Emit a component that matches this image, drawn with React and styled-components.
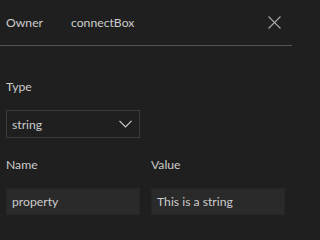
import React from 'react'
import styled, { createGlobalStyle } from 'styled-components'

const Global = createGlobalStyle`
  html, body {
    margin: 0;
    padding: 0;
    background: #1f1f1f;
  }
  body {
    font-family: Lato, "Noto Sans", sans-serif;
    font-size: 12.2px;
    color: #cccccc;
  }
`

const Panel = styled.div`
  width: 293px;
  height: 234px;
  background: #1f1f1f;
`

const Header = styled.div`
  display: flex;
  align-items: center;
  height: 44px;
  padding: 0 11px 1px 6px;
  border-bottom: 1px solid #555555;
  margin-right: 1px;
`

const HeaderKey = styled.span`
  width: 65px;
`

const HeaderValue = styled.span`
  flex: 1;
`

const CloseButton = styled.button`
  appearance: none;
  border: none;
  background: transparent;
  padding: 0;
  width: 13px;
  height: 13px;
  display: flex;
  cursor: pointer;
`

const Body = styled.div`
  padding: 32px 8px 0 6px;
`

const Field = styled.div`
  display: flex;
  flex-direction: column;
  gap: 14px;
`

const Label = styled.label`
  line-height: 18px;
`

const Row = styled.div`
  display: grid;
  grid-template-columns: 134px 134px;
  column-gap: 11px;
  margin-top: 18px;
`

const Select = styled.div`
  display: flex;
  align-items: center;
  justify-content: space-between;
  box-sizing: border-box;
  width: 134px;
  height: 28px;
  padding: 0 7px 0 5px;
  border: 1px solid #3c3c3c;
`

const Input = styled.div`
  display: flex;
  align-items: center;
  box-sizing: border-box;
  height: 27px;
  padding: 0 5px;
  background: #2a2a2a;
  border: 1px solid #262626;
`

const X = () => (
  <svg width="13" height="13" viewBox="0 0 13 13">
    <path d="M0.5 0.5 L12.5 12.5 M12.5 0.5 L0.5 12.5" stroke="#a8a8a8" strokeWidth="1.1" fill="none" />
  </svg>
)

const Chevron = () => (
  <svg width="13" height="8" viewBox="0 0 13 8">
    <path d="M0.5 0.8 L6.5 6.8 L12.5 0.8" stroke="#cccccc" strokeWidth="1.2" fill="none" />
  </svg>
)

export default function App() {
  return (
    <Panel>
      <Global />
      <Header>
        <HeaderKey>Owner</HeaderKey>
        <HeaderValue>connectBox</HeaderValue>
        <CloseButton aria-label="Close"><X /></CloseButton>
      </Header>
      <Body>
        <Field>
          <Label>Type</Label>
          <Select>
            <span>string</span>
            <Chevron />
          </Select>
        </Field>
        <Row>
          <Field>
            <Label>Name</Label>
            <Input>property</Input>
          </Field>
          <Field>
            <Label>Value</Label>
            <Input>This is a string</Input>
          </Field>
        </Row>
      </Body>
    </Panel>
  )
}
